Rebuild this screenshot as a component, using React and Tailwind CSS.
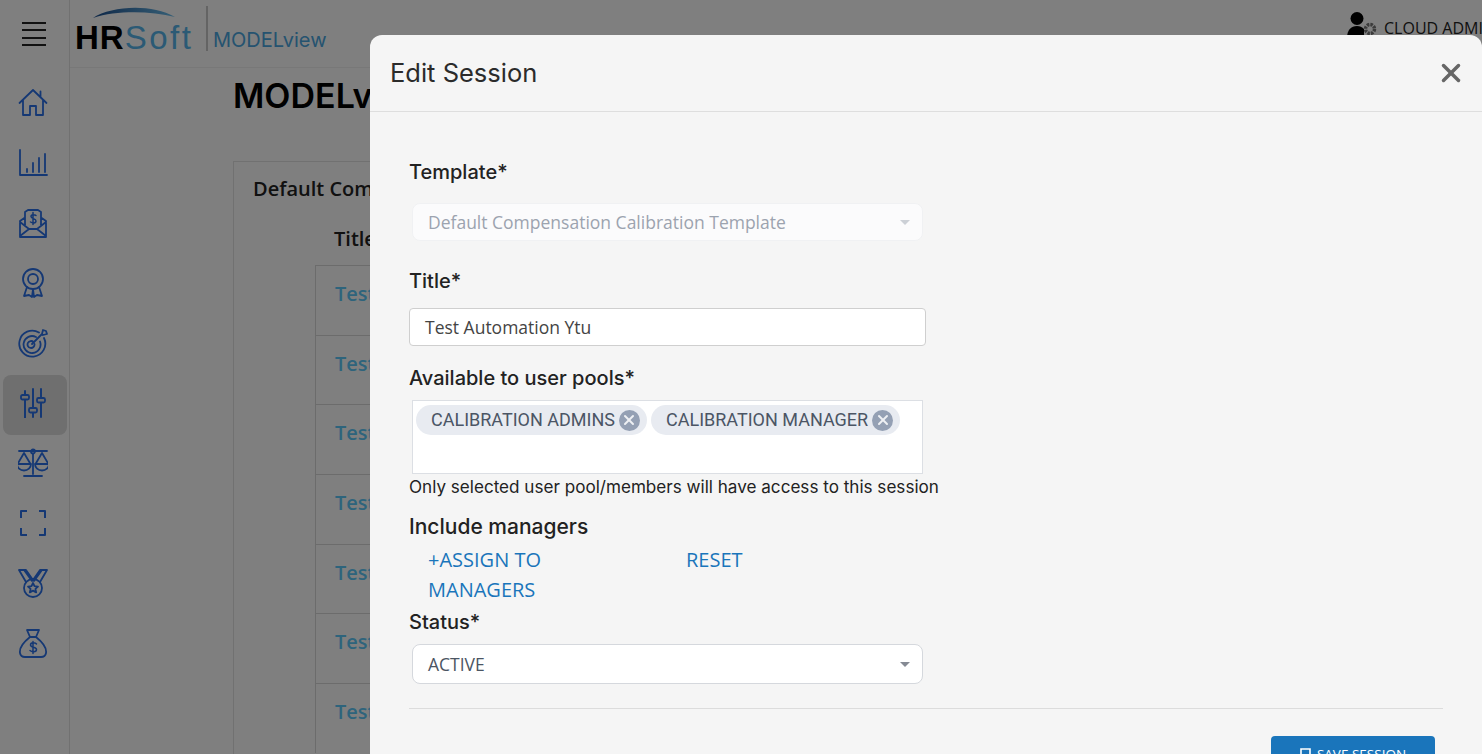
import { X } from "lucide-react";

const poppins = "font-['Inter','Noto_Sans',sans-serif]";

const Icon = ({ children }) => (
  <svg
    width="30"
    height="30"
    viewBox="0 0 30 30"
    fill="none"
    stroke="#2a70e8"
    strokeWidth="1.8"
    strokeLinecap="round"
    strokeLinejoin="round"
  >
    {children}
  </svg>
);

const navIcons = [
  <Icon key="home">
    <path d="M1.5 15 15 2l13.5 13M22.5 3.5v5M5 12v15h7v-9h6v9h7V12" />
  </Icon>,
  <Icon key="chart">
    <path d="M2 2v25h27M9 21v3M15 15v9M21 10v14M27 6v18" />
  </Icon>,
  <Icon key="mail">
    <path d="M2 13v16h26V13M2 13l5-3.5M28 13l-5-3.5M2 28l9-7h8l9 7M2 14l9 7M28 14l-9 7M7 17V4l3-2h10l3 2v13" />
    <path d="M18 7.5c-1-1-5-1.5-5 1s5 1.800 5 4.500-4 2-5.500 1M15 4.500v12" strokeWidth="1.5" />
  </Icon>,
  <Icon key="award">
    <circle cx="15" cy="11" r="10" />
    <circle cx="15" cy="11" r="5" />
    <path d="M9 19l-3 9 5-1 3 2 1-8M21 19l3 9-5-1-3 2-1-8" />
  </Icon>,
  <Icon key="target">
    <path d="M21 4.500A13 13 0 1 0 26 10M18 9a8.500 8.500 0 1 0 4 4.500M15.500 14a3.500 3.500 0 1 0 1 2" />
    <path d="M14 16 24 6M24 6l1-4 3 1 1 3-4 1z" />
  </Icon>,
  <Icon key="sliders">
    <path d="M7 3v27M15 1v28M23 1v28" strokeWidth="2" />
    <rect x="3" y="7" width="8" height="4.500" rx="1.500" fill="#dedede" />
    <rect x="11" y="20" width="8" height="4.500" rx="1.500" fill="#dedede" />
    <rect x="19" y="10" width="8" height="4.500" rx="1.500" fill="#dedede" />
  </Icon>,
  <Icon key="scale">
    <svg x="-3" y="0" width="36" height="30" viewBox="0 0 36 30">
      <path d="M4 3h28M18 6v20M9 28h18M9 5 2.500 16h13zM27 5l-6.500 11h13zM2 16a7 6.500 0 0 0 14 0M20 16a7 6.500 0 0 0 14 0" />
      <circle cx="18" cy="3.500" r="2" />
    </svg>
  </Icon>,
  <Icon key="scan">
    <path d="M9 3H3v7M21 3h6v7M9 27H3v-7M21 27h6v-7" strokeWidth="2" strokeLinecap="butt" />
  </Icon>,
  <Icon key="medal">
    <path d="M8 14 1 2h7l7 10 7-10h7l-7 12M6 2l8 11M24 2l-8 11" />
    <circle cx="15" cy="20" r="9" />
    <path d="m15 15 1.500 3.200 3.500.4-2.600 2.300.8 3.500-3.200-1.800-3.200 1.800.8-3.500L10 18.600l3.500-.4z" />
  </Icon>,
  <Icon key="bag">
    <path d="M9 2h12l-3 7h-6zM12 9h6M12 9C7 13 1 19 2 25c.5 3 3 4 5 4h16c2 0 4.500-1 5-4 1-6-5-12-10-16" />
    <path d="M18.500 16c-1-1.500-6-2-6 1 0 3 6 1.500 6 4.500s-5 2.500-6.500 1M15 13.500v12" strokeWidth="1.5" />
  </Icon>,
];

const rows = [0, 1, 2, 3, 4, 5, 6];

const Background = () => (
  <div className="flex h-full w-full bg-white">
    <aside className="flex w-[70px] shrink-0 flex-col items-center border-r border-[#e2e2e2]">
      <div className="flex h-[68px] w-full shrink-0 flex-col items-center justify-center gap-[5.500px] pr-[1px]">
        <span className="h-[2px] w-[24px] bg-[#222]" />
        <span className="h-[2px] w-[24px] bg-[#222]" />
        <span className="h-[2px] w-[24px] bg-[#222]" />
        <span className="h-[2px] w-[24px] bg-[#222]" />
      </div>
      <div className="mt-[7px] flex flex-col items-center">
        {navIcons.map((icon, i) => (
          <div
            key={i}
            className={`flex h-[60px] w-[64px] items-center justify-center rounded-lg pb-[4px] pr-[4px] ${i === 5 ? "bg-[#dedede]" : ""}`}
          >
            {icon}
          </div>
        ))}
      </div>
    </aside>

    <main className="min-w-0 flex-1 overflow-hidden">
      <header className="flex h-[68px] items-start border-b border-[#f0f0f0]">
        <div className="relative ml-[5px] w-[116px] pt-[16px]">
          <svg className="absolute left-[17px] top-[6px]" width="84" height="14" viewBox="0 0 86 14">
            <defs>
              <linearGradient id="arc" x1="0" x2="1" y1="0" y2="0">
                <stop offset="0" stopColor="#1c4f8f" />
                <stop offset="1" stopColor="#6ec0ee" />
              </linearGradient>
            </defs>
            <path d="M1 12C20 0 60-3 85 11 60 5 26 4 1 12z" fill="url(#arc)" />
          </svg>
          <p className="whitespace-nowrap font-['Liberation_Sans',sans-serif] text-[33px] leading-[44px] tracking-[1px] text-black">
            <span className="font-bold">HR</span>
            <span className="font-light tracking-[2.500px] text-[#56b4ea]">Soft</span>
          </p>
        </div>
        <div className="ml-[15px] mt-[6px] h-[45px] w-[2px] bg-[#c8c8c8]" />
        <p className={`ml-[5px] mt-[26px] text-[20px] leading-[28px] text-[#4aa6e0] ${poppins}`}>MODELview</p>
        <div className="ml-auto mr-[-2px] mt-[8px] flex w-[138px] shrink-0 items-center overflow-hidden">
          <svg width="38" height="30" viewBox="0 0 38 30" className="shrink-0">
            <circle cx="11" cy="9.500" r="6.500" fill="#000" />
            <path d="M1 29c0-8 4-12 10-12 3 0 5 1 7 3v9z" fill="#000" />
            <circle cx="24" cy="20" r="4.500" fill="none" stroke="#777" strokeWidth="3.500" strokeDasharray="2.500 1" />
          </svg>
          <span className="whitespace-nowrap pt-[8px] font-['Open_Sans',sans-serif] text-[16px] text-[#222]">CLOUD ADMIN</span>
        </div>
      </header>

      <div className="pl-[163px]">
        <h1 className={`mt-[6px] whitespace-nowrap text-[34px] font-semibold leading-[44px] text-black ${poppins}`}>MODELview Sessions</h1>
        <section className="mt-[43px] border border-[#e2e2e2] pb-[20px] pl-[19px] pt-[13px]">
          <h2 className="whitespace-nowrap font-['Open_Sans',sans-serif] text-[20px] font-semibold leading-[28px] text-[#222]">Default Compensation Calibration Template</h2>
          <div className="pl-[62px]">
            <p className="mt-[22px] h-[40px] pl-[19px] font-['Open_Sans',sans-serif] text-[20px] font-semibold leading-[28px] text-[#222]">Title</p>
            {rows.map((row) => (
              <div
                key={row}
                className="h-[69.700px] border border-b-0 border-[#d8d8d8] pl-[19px] pt-[13px] font-['Open_Sans',sans-serif] text-[20px] font-semibold leading-[30px] text-[#5cc8f8]"
              >
                Test Automation
              </div>
            ))}
          </div>
        </section>
      </div>
    </main>
  </div>
);

const Caret = ({ color }) => (
  <svg width="10" height="5" viewBox="0 0 10 5" className="shrink-0">
    <path d="M0 0h10L5 5z" fill={color} />
  </svg>
);

const Chip = ({ label }) => (
  <span className="flex h-[30px] items-center rounded-full bg-[#e8ebf1] pb-[1px] pl-[15px] pr-[7px] font-['Roboto',sans-serif] text-[18px] text-[#4b5565]">
    {label}
    <span className="ml-[4px] mt-[1px] flex h-[21px] w-[21px] items-center justify-center rounded-full bg-[#94a0b4]">
      <X size={16} strokeWidth={3} color="#eef0f4" />
    </span>
  </span>
);

const Label = ({ children, className = "" }) => (
  <p className={`font-medium leading-[26px] text-[#222] ${poppins} ${className}`}>{children}</p>
);

const EditSessionModal = () => (
  <div className="absolute bottom-[-80px] left-[370px] right-0 top-[35px] overflow-hidden rounded-t-xl bg-[#f5f5f5]">
    <div className="flex h-[77px] items-center justify-between border-b border-[#dedede] pl-[20px] pr-[16px]">
      <h3 className={`text-[25.500px] font-normal text-[#2b2b2b] ${poppins}`}>Edit Session</h3>
      <X size={30} strokeWidth={2.8} color="#666666" />
    </div>

    <div className="pl-[39px] pr-[39px] pt-[47px]">
      <Label className="text-[20px]">Template*</Label>
      <div className="ml-[3px] mt-[18px] flex h-[38px] w-[511px] items-center justify-between rounded-lg border border-[#f0f1f3] bg-[#fbfbfc] pl-[15px] pr-[12px] font-['Open_Sans',sans-serif] text-[17.500px] text-[#9ca3af]">
        Default Compensation Calibration Template
        <Caret color="#ccd0d6" />
      </div>

      <Label className="mt-[27px] text-[20px]">Title*</Label>
      <div className="mt-[14px] flex h-[38px] w-[517px] items-center rounded border border-[#cfcfcf] bg-white pl-[15px] font-['Open_Sans',sans-serif] text-[17.500px] text-[#444]">
        Test Automation Ytu
      </div>

      <Label className="mt-[19px] text-[20px]">Available to user pools*</Label>
      <div className="ml-[3px] mt-[9px] flex h-[74px] w-[511px] items-start gap-[4px] border border-[#dcdfe4] bg-white pl-[3px] pt-[4px]">
        <Chip label="CALIBRATION ADMINS" />
        <Chip label="CALIBRATION MANAGER" />
      </div>
      <p className={`mt-[1px] whitespace-nowrap text-[17.100px] leading-[24px] text-[#222] ${poppins}`}>Only selected user pool/members will have access to this session</p>

      <Label className="mt-[15px] text-[21px]">Include managers</Label>
      <div className="mt-[5px] flex font-['Open_Sans',sans-serif] text-[20px] leading-[30px] text-[#1a75bb]">
        <span className="ml-[19px] w-[258px]">
          +ASSIGN TO
          <br />
          MANAGERS
        </span>
        <span>RESET</span>
      </div>

      <Label className="mt-[4px] text-[20px]">Status*</Label>
      <div className="ml-[3px] mt-[9px] flex h-[40px] w-[511px] items-center justify-between rounded-lg border border-[#d5d8dd] bg-white pl-[15px] pr-[12px] font-['Open_Sans',sans-serif] text-[17.500px] text-[#4b5563]">
        ACTIVE
        <Caret color="#858a94" />
      </div>

      <hr className="mt-[24px] border-[#dcdcdc]" />
      <div className="mt-[27px] flex justify-end pr-[8px]">
        <button className="flex h-[44px] w-[164px] items-start justify-center gap-[6px] rounded bg-[#1a75bb] pt-[8px] font-['Open_Sans',sans-serif] text-[13.500px] text-white">
          <svg width="11" height="14" viewBox="0 0 11 14" fill="none" stroke="#fff" strokeWidth="1.600" className="mt-[4px]">
            <path d="M1 1h9v12l-4.500-3L1 13z" />
          </svg>
          SAVE SESSION
        </button>
      </div>
    </div>
  </div>
);

export default function App() {
  return (
    <div className="relative h-screen w-full overflow-hidden">
      <Background />
      <div className="absolute inset-0 bg-black/50" />
      <EditSessionModal />
    </div>
  );
}
